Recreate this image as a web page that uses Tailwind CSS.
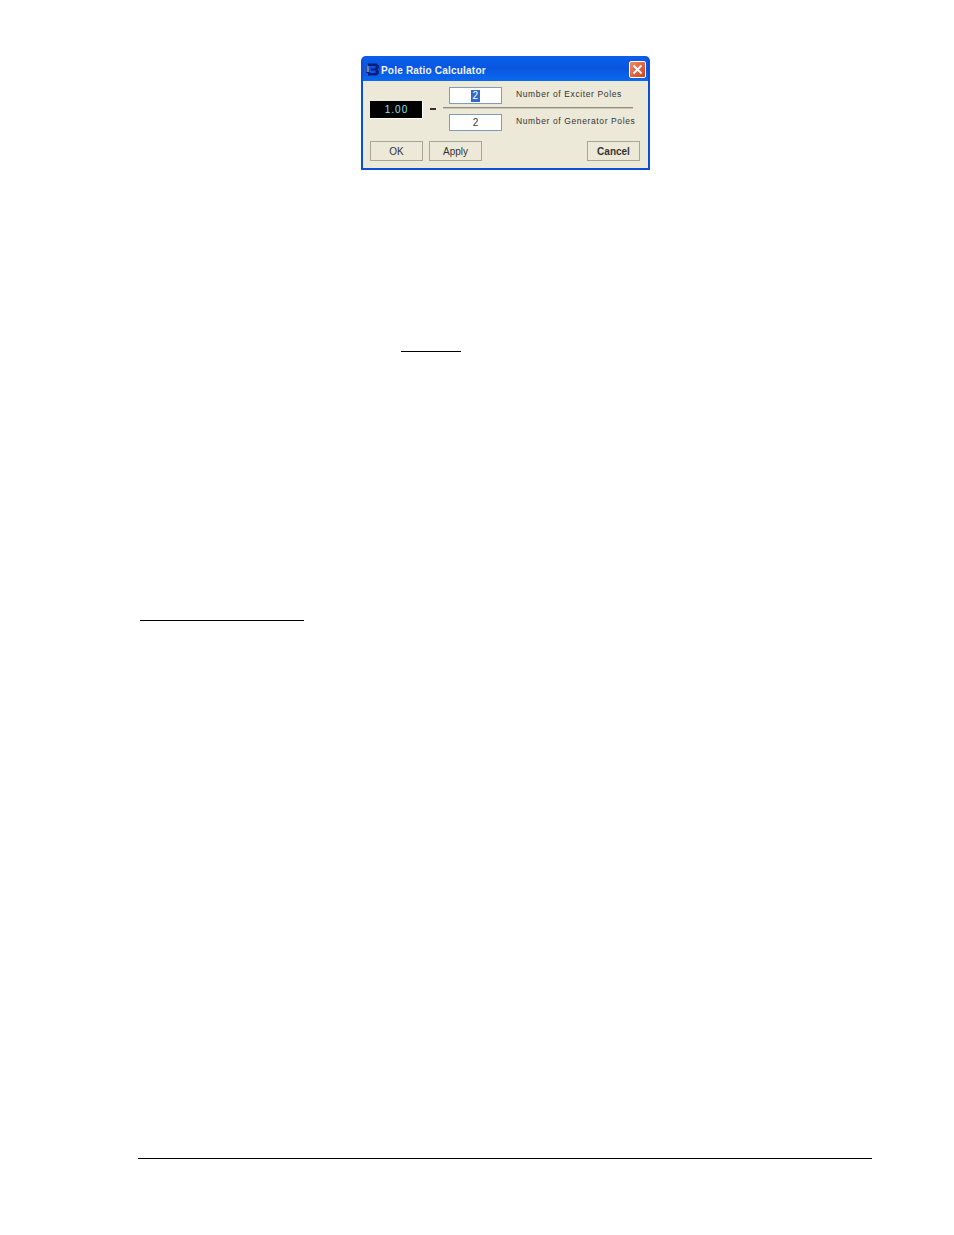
<!DOCTYPE html>
<html lang="en">
  <head>
    <meta charset="UTF-8" />
    <title>Pole Ratio Calculator</title>
    <script src="https://cdn.jsdelivr.net/npm/@tailwindcss/browser@4"></script>
  </head>

  <body class="bg-white h-[1235px] w-[954px] overflow-hidden font-['Liberation_Sans',sans-serif]">
    <!-- dialog -->
    <div class="ml-[361px] mt-[56px] w-[289px] h-[114px] flex flex-col bg-[#0a4fd6] rounded-t-[5px] px-[2px] pb-[2px]">
      <div class="h-[25px] shrink-0 flex items-center bg-gradient-to-b from-[#0a5fe8] via-[#0a55e0] to-[#0a6af0] rounded-t-[5px] pl-[2px] pr-[2px] pt-[2px]">
        <svg class="w-[15px] h-[15px] shrink-0" viewBox="0 0 15 15">
          <path d="M3 1.500h8.500l2.500 2v2.500l-1.500 1.500 1.500 1.500v2.500l-2.500 2H3v-2.500h7.500v-2.500H6v-2h4.500v-2.500H3z" fill="#0b1f7a" />
          <rect x="1" y="4" width="4" height="7" fill="#0b1f7a" />
          <path d="M1.500 5h3M1.500 7h3M1.500 9h3" stroke="#e8eefc" stroke-width=".9" />
        </svg>
        <span class="ml-[1px] pt-[2px] text-[10px] font-bold text-[#eef3ff] tracking-[0.2px] leading-none">Pole Ratio Calculator</span>
        <div class="ml-auto w-[17px] h-[17px] -mt-[1px] rounded-[2px] border border-white bg-gradient-to-br from-[#ef8a64] to-[#d2401c] flex items-center justify-center">
          <svg class="w-[11px] h-[11px]" viewBox="0 0 11 11">
            <path d="M1.500 1.500l8 8M9.500 1.500l-8 8" stroke="#fff" stroke-width="1.800" />
          </svg>
        </div>
      </div>

      <div class="flex-1 bg-[#ece9d8] pl-[7px] pr-[8px] pt-[6px] text-[8.500px] text-[#333] tracking-[0.62px]">
        <div class="flex items-center h-[44px]">
          <div class="w-[53px] h-[18px] mt-[2px] pb-[1px] bg-black border-b border-r border-white text-[#8fe0f0] text-[10px] tracking-[1px] pl-[1px] flex items-center justify-center">1.00</div>
          <div class="w-[6px] h-[2px] bg-[#333] ml-[7px] mr-[7px]"></div>
          <div class="w-[190px] flex flex-col">
            <div class="flex items-center h-[17px]">
              <div class="ml-[6px] w-[53px] h-[17px] shrink-0 bg-white border border-[#7f9db9] flex items-center justify-center">
                <span class="bg-[#316ac5] text-white text-[10px] leading-[12px] px-[1px]">2</span>
              </div>
              <span class="ml-[14px] pb-[3px] whitespace-nowrap">Number of Exciter Poles</span>
            </div>
            <div class="h-[2px] mt-[3px] mb-[5px] bg-[#8f8d7f] border-b border-[#c8c5b4]"></div>
            <div class="flex items-center h-[17px]">
              <div class="ml-[6px] w-[53px] h-[17px] shrink-0 bg-white border border-[#7f9db9] flex items-center justify-center text-[10px] tracking-normal">2</div>
              <span class="ml-[14px] pb-[3px] whitespace-nowrap">Number of Generator Poles</span>
            </div>
          </div>
        </div>
        <div class="flex mt-[10px] gap-[6px]">
          <button class="w-[53px] h-[20px] border border-[#a8a698] text-[10px] tracking-normal text-[#333]">OK</button>
          <button class="w-[53px] h-[20px] border border-[#a8a698] text-[10px] tracking-normal text-[#333]">Apply</button>
          <button class="ml-auto w-[53px] h-[20px] border border-[#a8a698] text-[10px] font-bold tracking-normal text-[#333]">Cancel</button>
        </div>
      </div>
    </div>

    <!-- rules left from the page text -->
    <div class="ml-[401px] mt-[181px] w-[60px] h-px bg-black"></div>
    <div class="ml-[140px] mt-[268px] w-[164px] h-px bg-black"></div>
    <div class="ml-[138px] mt-[537px] w-[734px] h-px bg-black"></div>
  </body>
</html>
